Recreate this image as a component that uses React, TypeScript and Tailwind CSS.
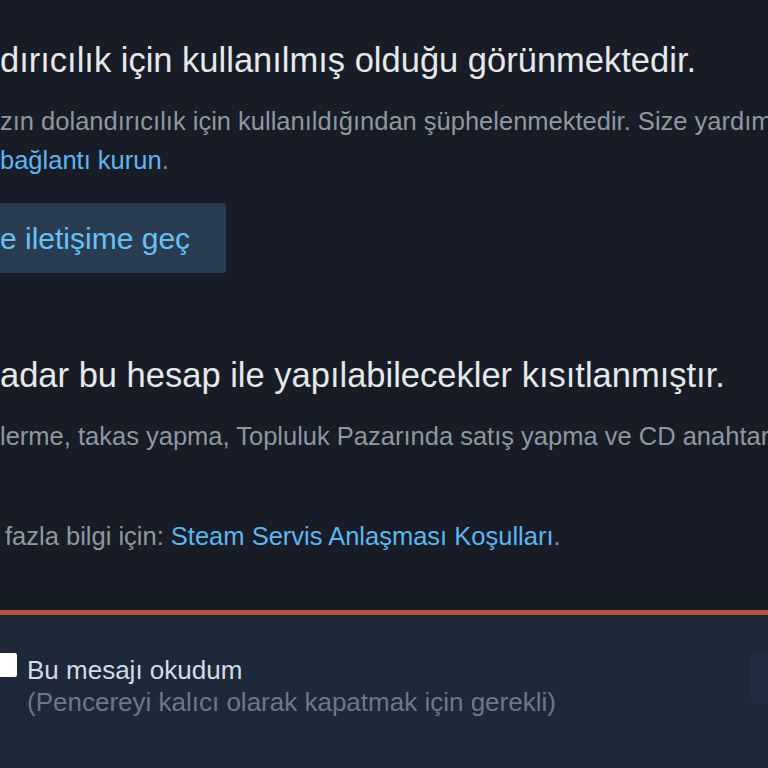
export default function App() {
  return (
    <div className="w-[768px] h-[768px] overflow-hidden bg-[#171c27] flex flex-col font-['Liberation_Sans',Arial,sans-serif]">
      {/* Message body */}
      <div className="flex flex-col pt-[40px] h-[597px] shrink-0">
        <div className="whitespace-nowrap text-[34.5px] leading-[40px] text-[#e6e8ea]">
          dırıcılık için kullanılmış olduğu görünmektedir.
        </div>
        <div className="mt-[22px] whitespace-nowrap text-[25.5px] leading-[39px] text-[#8f979f]">
          <div>zın dolandırıcılık için kullanıldığından şüphelenmektedir. Size yardımcı</div>
          <div>
            <span className="text-[#5eb6ee]">bağlantı kurun</span>.
          </div>
        </div>
        <div className="mt-[23px] flex">
          <button className="-ml-[40px] h-[70px] w-[266px] rounded-[3px] bg-[#2a3c51] pl-[40px] text-left text-[30px] text-[#67c1f5] whitespace-nowrap">
            e iletişime geç
          </button>
        </div>
        <div className="mt-[82px] whitespace-nowrap text-[34.5px] leading-[40px] text-[#e6e8ea]">
          adar bu hesap ile yapılabilecekler kısıtlanmıştır.
        </div>
        <div className="mt-[22px] whitespace-nowrap text-[25.5px] leading-[39px] text-[#8f979f]">
          lerme, takas yapma, Topluluk Pazarında satış yapma ve CD anahtarı
        </div>
        <div className="mt-[61px] pl-[5px] whitespace-nowrap text-[25.5px] leading-[39px] text-[#8f979f]">
          fazla bilgi için:{" "}
          <span className="text-[#5eb6ee]">Steam Servis Anlaşması Koşulları</span>.
        </div>
      </div>
      <div className="h-[13px] shrink-0 bg-[#141d21]" />
      {/* Red divider */}
      <div className="h-[5px] shrink-0 bg-[#b75446]" />
      {/* Footer */}
      <div className="flex-1 bg-[#1d2838] flex items-start justify-between pt-[36px]">
        <label className="flex items-start gap-[10px] -ml-[7px]">
          <span className="mt-[2px] h-[24px] w-[24px] shrink-0 bg-white rounded-[2px]" />
          <span className="flex flex-col pt-[3px]">
            <span className="text-[26px] leading-[32px] text-[#d3dce4]">Bu mesajı okudum</span>
            <span className="text-[26px] leading-[32px] text-[#6c7886]">
              (Pencereyi kalıcı olarak kapatmak için gerekli)
            </span>
          </span>
        </label>
        <div className="mt-[2px] -mr-[100px] h-[50px] w-[118px] rounded-[4px] bg-[#202d3f]" />
      </div>
    </div>
  );
}
